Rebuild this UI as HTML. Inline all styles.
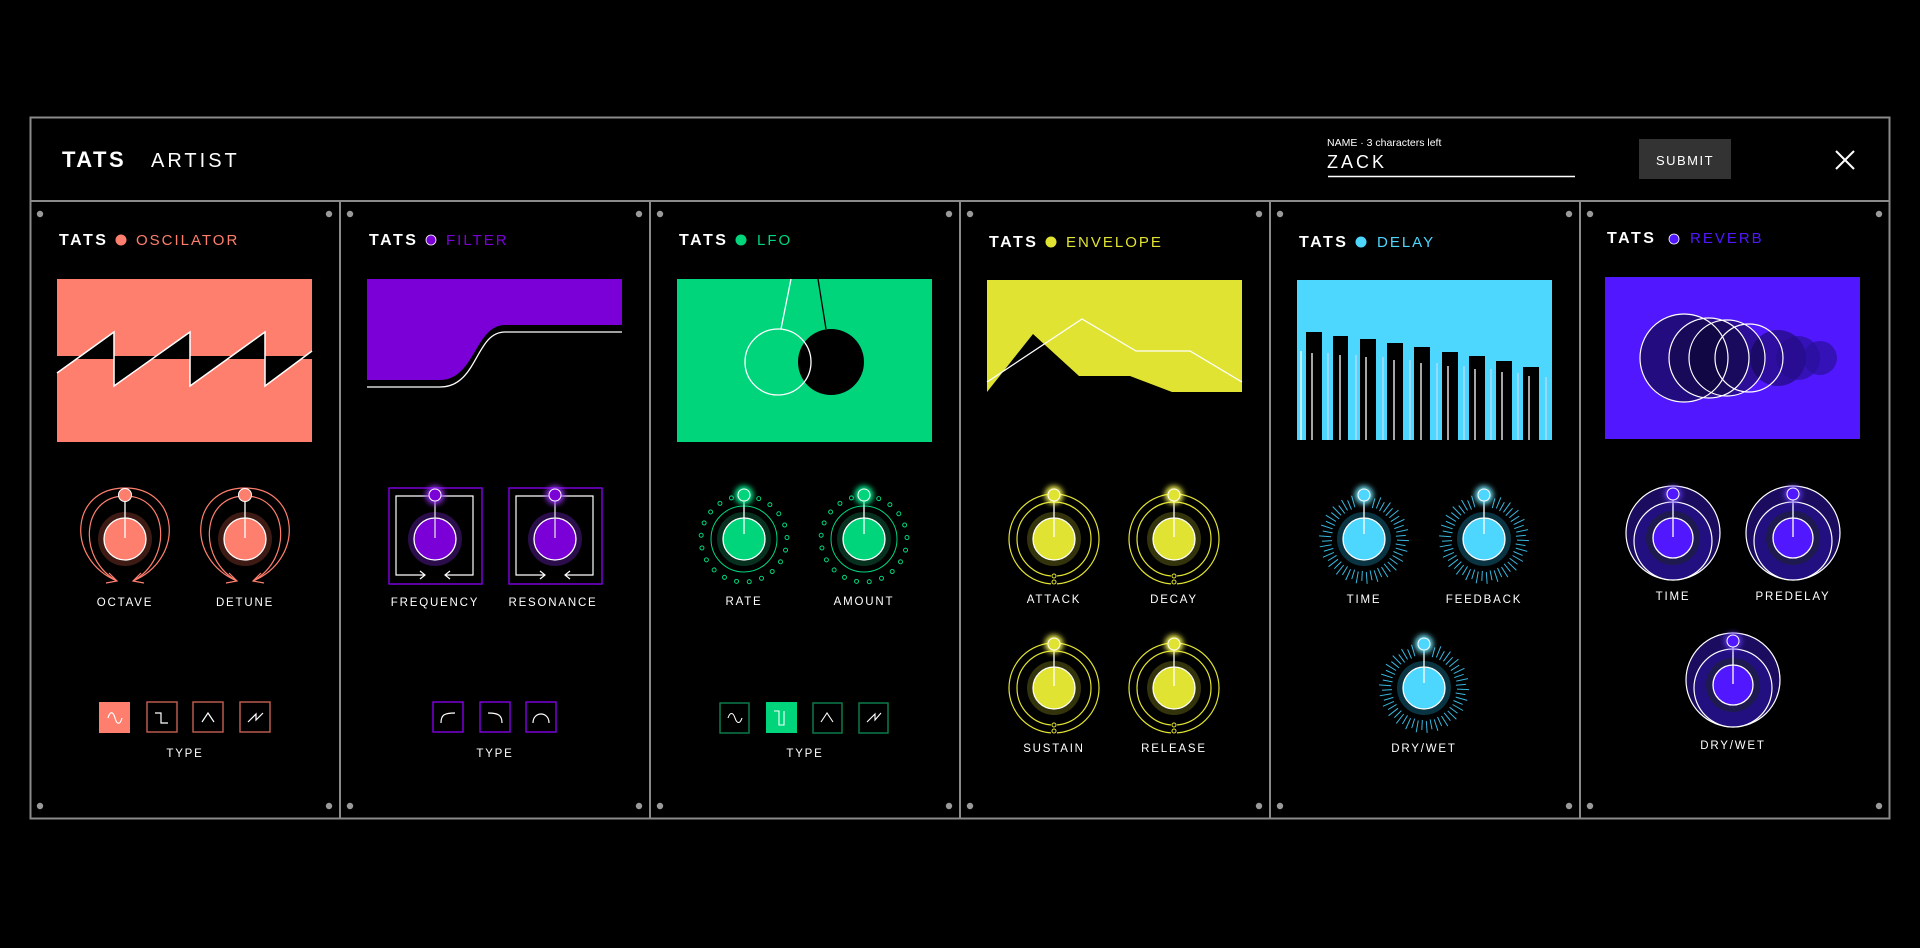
<!DOCTYPE html>
<html><head><meta charset="utf-8"><style>
html,body{margin:0;padding:0;background:#000;width:1920px;height:948px;overflow:hidden}
svg{display:block;font-family:"Liberation Sans",sans-serif}
.tt{font-weight:bold;font-size:16px;letter-spacing:2.5px;fill:#fff}
.nm{font-size:15px;letter-spacing:2px}
.lb{font-size:11.5px;letter-spacing:1.8px;fill:#fff;text-anchor:middle}
</style></head><body>
<svg width="1920" height="948" viewBox="0 0 1920 948" xmlns="http://www.w3.org/2000/svg">
<defs>
<filter id="gl" x="-2" y="-2" width="5" height="5"><feGaussianBlur stdDeviation="3"/></filter>
<g id="screws" fill="#9a9a9a"><circle cx="10" cy="13" r="3.2"/><circle cx="299" cy="13" r="3.2"/><circle cx="10" cy="605" r="3.2"/><circle cx="299" cy="605" r="3.2"/></g>

<!-- OSC knob -->
<g id="kOsc">
<path d="M-8,42 C-60,20 -55,-51 0,-51 C55,-51 60,20 8,42" fill="none" stroke="#ff7f6e" stroke-width="1.2"/>
<path d="M-8,42 C-48,20 -44,-43 0,-43 C44,-43 48,20 8,42" fill="none" stroke="#ff7f6e" stroke-width="1.2"/>
<path d="M-16,34 L-8,42 L-19,44 M16,34 L8,42 L19,44" fill="none" stroke="#ff7f6e" stroke-width="1.2"/>
<circle r="27" fill="#3d1b14"/><circle r="21" fill="#ff7f6e" stroke="#fff" stroke-width="1.3"/>
<line x1="0" y1="-38" x2="0" y2="-1" stroke="#fff" stroke-width="1.3"/>
<circle cy="-44" r="6.5" fill="#ff7f6e" stroke="#fff" stroke-width="1"/>
</g>
<!-- Filter knob -->
<g id="kFil">
<rect x="-46" y="-51" width="93" height="96" fill="none" stroke="#7b00d8" stroke-width="1.5"/>
<path d="M-10,36 H-39 V-43 H38 V36 H10" fill="none" stroke="#fff" stroke-width="1.2"/>
<path d="M-15,32 L-10,36 L-15,40 M15,32 L10,36 L15,40" fill="none" stroke="#fff" stroke-width="1.2"/>
<circle r="27" fill="#2a0d4a"/><circle r="21" fill="#7b00d8" stroke="#fff" stroke-width="1.3"/>
<line x1="0" y1="-38" x2="0" y2="-1" stroke="#ddd" stroke-width="1.3"/>
<circle cy="-44" r="9" fill="#9b30ff" filter="url(#gl)"/>
<circle cy="-44" r="6" fill="#7b00d8" stroke="#fff" stroke-width="1"/>
</g>
<!-- LFO knob -->
<g id="lfoDot"><circle cx="0" cy="-43" r="2" fill="none" stroke="#00d57c" stroke-width="1"/></g>
<g id="kLfo">
<use href="#lfoDot" transform="rotate(20)"/><use href="#lfoDot" transform="rotate(37)"/><use href="#lfoDot" transform="rotate(54)"/><use href="#lfoDot" transform="rotate(71)"/><use href="#lfoDot" transform="rotate(88)"/><use href="#lfoDot" transform="rotate(105)"/><use href="#lfoDot" transform="rotate(122)"/><use href="#lfoDot" transform="rotate(139)"/><use href="#lfoDot" transform="rotate(156)"/><use href="#lfoDot" transform="rotate(173)"/><use href="#lfoDot" transform="rotate(190)"/><use href="#lfoDot" transform="rotate(207)"/><use href="#lfoDot" transform="rotate(224)"/><use href="#lfoDot" transform="rotate(241)"/><use href="#lfoDot" transform="rotate(258)"/><use href="#lfoDot" transform="rotate(275)"/><use href="#lfoDot" transform="rotate(292)"/><use href="#lfoDot" transform="rotate(309)"/><use href="#lfoDot" transform="rotate(326)"/><use href="#lfoDot" transform="rotate(343)"/>
<circle r="33" fill="none" stroke="#00d57c" stroke-width="1"/>
<circle r="27" fill="#07301e"/><circle r="21" fill="#00d57c" stroke="#fff" stroke-width="1.3"/>
<line x1="0" y1="-38" x2="0" y2="-5" stroke="#fff" stroke-width="1.3"/>
<circle cy="-44" r="9" fill="#00ff99" filter="url(#gl)"/>
<circle cy="-44" r="6" fill="#00d57c" stroke="#fff" stroke-width="1"/>
</g>
<!-- Envelope knob -->
<g id="kEnv">
<circle r="45" fill="none" stroke="#e1e332" stroke-width="1.2"/>
<circle r="37" fill="none" stroke="#e1e332" stroke-width="1.2"/>
<rect x="-3" y="34" width="6" height="14" fill="#000"/>
<circle cy="37" r="2" fill="none" stroke="#e1e332" stroke-width="1"/>
<circle cy="43" r="2" fill="none" stroke="#e1e332" stroke-width="1"/>
<circle r="27" fill="#34340c"/><circle r="21" fill="#e1e332" stroke="#fff" stroke-width="1.3"/>
<line x1="0" y1="-38" x2="0" y2="-2" stroke="#fff" stroke-width="1.3"/>
<circle cy="-44" r="9" fill="#ffff55" filter="url(#gl)"/>
<circle cy="-44" r="6" fill="#e1e332" stroke="#fff" stroke-width="1"/>
</g>
<!-- Delay knob -->
<g id="tk"><line x1="0" y1="-32" x2="0" y2="-42" stroke="#3ab8e0" stroke-width="1"/></g>
<g id="tk2"><line x1="0" y1="-33" x2="0" y2="-45" stroke="#3ab8e0" stroke-width="1"/></g>
<g id="kDel">
<g>
<use href="#tk" transform="rotate(15)"/><use href="#tk2" transform="rotate(22)"/><use href="#tk" transform="rotate(29)"/><use href="#tk2" transform="rotate(36)"/><use href="#tk" transform="rotate(43)"/><use href="#tk2" transform="rotate(50)"/><use href="#tk" transform="rotate(57)"/><use href="#tk2" transform="rotate(64)"/><use href="#tk" transform="rotate(71)"/><use href="#tk2" transform="rotate(78)"/><use href="#tk" transform="rotate(85)"/><use href="#tk2" transform="rotate(92)"/><use href="#tk" transform="rotate(99)"/><use href="#tk2" transform="rotate(106)"/><use href="#tk" transform="rotate(113)"/><use href="#tk2" transform="rotate(120)"/><use href="#tk" transform="rotate(127)"/><use href="#tk2" transform="rotate(134)"/><use href="#tk" transform="rotate(141)"/><use href="#tk2" transform="rotate(148)"/><use href="#tk" transform="rotate(155)"/><use href="#tk2" transform="rotate(162)"/><use href="#tk" transform="rotate(169)"/><use href="#tk2" transform="rotate(176)"/><use href="#tk" transform="rotate(183)"/><use href="#tk2" transform="rotate(190)"/><use href="#tk" transform="rotate(197)"/><use href="#tk2" transform="rotate(204)"/><use href="#tk" transform="rotate(211)"/><use href="#tk2" transform="rotate(218)"/><use href="#tk" transform="rotate(225)"/><use href="#tk2" transform="rotate(232)"/><use href="#tk" transform="rotate(239)"/><use href="#tk2" transform="rotate(246)"/><use href="#tk" transform="rotate(253)"/><use href="#tk2" transform="rotate(260)"/><use href="#tk" transform="rotate(267)"/><use href="#tk2" transform="rotate(274)"/><use href="#tk" transform="rotate(281)"/><use href="#tk2" transform="rotate(288)"/><use href="#tk" transform="rotate(295)"/><use href="#tk2" transform="rotate(302)"/><use href="#tk" transform="rotate(309)"/><use href="#tk2" transform="rotate(316)"/><use href="#tk" transform="rotate(323)"/><use href="#tk2" transform="rotate(330)"/><use href="#tk" transform="rotate(337)"/><use href="#tk2" transform="rotate(344)"/>
</g>
<circle r="27" fill="#0b3442"/><circle r="21" fill="#4dd6fe" stroke="#fff" stroke-width="1.3"/>
<line x1="0" y1="-38" x2="0" y2="-5" stroke="#fff" stroke-width="1.3"/>
<circle cy="-44" r="9" fill="#70e8ff" filter="url(#gl)"/>
<circle cy="-44" r="6" fill="#4dd6fe" stroke="#fff" stroke-width="1"/>
</g>
<!-- Reverb knob -->
<g id="kRev">
<circle cy="-5" r="47" fill="#1c0c60" stroke="#fff" stroke-width="1.2"/>
<circle cy="3" r="39" fill="#220f80" stroke="#fff" stroke-width="1.2"/>
<circle r="27" fill="#1e1a50"/><circle r="20" fill="#5118ff" stroke="#fff" stroke-width="1.3"/>
<line x1="0" y1="-38" x2="0" y2="-1" stroke="#fff" stroke-width="1.3"/>
<circle cy="-44" r="8" fill="#6a40ff" filter="url(#gl)"/>
<circle cy="-44" r="6" fill="#5118ff" stroke="#fff" stroke-width="1"/>
</g>
</defs>

<!-- Frame -->
<rect x="30.5" y="117.5" width="1859" height="701" fill="none" stroke="#8a8a8a" stroke-width="2"/>
<line x1="30" y1="201" x2="1890" y2="201" stroke="#8a8a8a" stroke-width="2"/>
<g stroke="#8a8a8a" stroke-width="2"><line x1="340" y1="201" x2="340" y2="819"/><line x1="650" y1="201" x2="650" y2="819"/><line x1="960" y1="201" x2="960" y2="819"/><line x1="1270" y1="201" x2="1270" y2="819"/><line x1="1580" y1="201" x2="1580" y2="819"/></g>

<!-- Header -->
<text x="62" y="167" fill="#fff" font-size="22" font-weight="bold" letter-spacing="2.5">TATS</text>
<text x="151" y="167" fill="#fff" font-size="20" letter-spacing="3">ARTIST</text>
<text x="1327" y="146" fill="#fff" font-size="10.5">NAME · 3 characters left</text>
<text x="1327" y="168" fill="#fff" font-size="18" letter-spacing="3">ZACK</text>
<line x1="1328" y1="176.5" x2="1575" y2="176.5" stroke="#fff" stroke-width="1.5"/>
<rect x="1639" y="139" width="92" height="40" fill="#333"/>
<text x="1685" y="165" fill="#fff" font-size="13" letter-spacing="1.5" text-anchor="middle">SUBMIT</text>
<path d="M1836,151 L1854,169 M1854,151 L1836,169" stroke="#fff" stroke-width="2"/>

<!-- OSC -->
<g transform="translate(30,201)">
<use href="#screws"/>
<text x="29" y="44" class="tt">TATS</text><circle cx="91" cy="39" r="5.5" fill="#ff7f6e"/><text x="106" y="44" class="nm" fill="#ff7f6e">OSCILATOR</text>
<rect x="27" y="78" width="255" height="163" fill="#ff7f6e"/>
<polygon points="27,172 84,131 84,185 160,131 160,185 235,131 235,185 282,150 282,157 27,157" fill="#000" fill-rule="evenodd"/>
<rect x="27" y="155" width="255" height="3" fill="#000"/>
<polyline points="27,172 84,131 84,185 160,131 160,185 235,131 235,185 282,150" fill="none" stroke="#fff" stroke-width="1.5"/>
<use href="#kOsc" x="95" y="338"/><use href="#kOsc" x="215" y="338"/>
<text x="95" y="405" class="lb">OCTAVE</text><text x="215" y="405" class="lb">DETUNE</text>
<rect x="69" y="501" width="31" height="31" fill="#ff7f6e"/>
<path d="M78,517 C80,510 83,510 85,517 C87,524 90,524 92,517" fill="none" stroke="#fff" stroke-width="1.2"/>
<rect x="117" y="501" width="30" height="30" fill="none" stroke="#b85a4d" stroke-width="1.5"/>
<path d="M125,512 H131 V522 H138" fill="none" stroke="#fff" stroke-width="1.2"/>
<rect x="163" y="501" width="30" height="30" fill="none" stroke="#b85a4d" stroke-width="1.5"/>
<path d="M172,521 L178,512 L184,521" fill="none" stroke="#fff" stroke-width="1.2"/>
<rect x="210" y="501" width="30" height="30" fill="none" stroke="#b85a4d" stroke-width="1.5"/>
<path d="M218,521 L226,513 V519 L233,512" fill="none" stroke="#fff" stroke-width="1.2"/>
<text x="155" y="556" class="lb">TYPE</text>
</g>

<!-- FILTER -->
<g transform="translate(340,201)">
<use href="#screws"/>
<text x="29" y="44" class="tt">TATS</text><circle cx="91" cy="39" r="5" fill="#7b00d8" stroke="#fff" stroke-width="0.8"/><text x="106" y="44" class="nm" fill="#7b00d8">FILTER</text>
<path d="M27,78 H282 V124 H165 C135,124 135,179 100,179 H27 Z" fill="#7b00d8"/>
<path d="M27,186 H100 C138,186 135,131 165,131 H282" fill="none" stroke="#fff" stroke-width="1.3"/>
<use href="#kFil" x="95" y="338"/><use href="#kFil" x="215" y="338"/>
<text x="95" y="405" class="lb">FREQUENCY</text><text x="213" y="405" class="lb">RESONANCE</text>
<rect x="93" y="501" width="30" height="30" fill="none" stroke="#7b00d8" stroke-width="1.5"/>
<path d="M101,522 C101,514 104,512 115,512" fill="none" stroke="#fff" stroke-width="1.2"/>
<rect x="140" y="501" width="30" height="30" fill="none" stroke="#7b00d8" stroke-width="1.5"/>
<path d="M148,512 C158,512 162,514 162,522" fill="none" stroke="#fff" stroke-width="1.2"/>
<rect x="186" y="501" width="30" height="30" fill="none" stroke="#7b00d8" stroke-width="1.5"/>
<path d="M193,522 C193,510 209,510 209,522" fill="none" stroke="#fff" stroke-width="1.2"/>
<text x="155" y="556" class="lb">TYPE</text>
</g>

<!-- LFO -->
<g transform="translate(650,201)">
<use href="#screws"/>
<text x="29" y="44" class="tt">TATS</text><circle cx="91" cy="39" r="5.5" fill="#00d57c"/><text x="107" y="44" class="nm" fill="#00d57c">LFO</text>
<rect x="27" y="78" width="255" height="163" fill="#00d57c"/>
<line x1="141" y1="78" x2="131" y2="128" stroke="#fff" stroke-width="1.3"/>
<line x1="168" y1="78" x2="176" y2="128" stroke="#000" stroke-width="1.3"/>
<circle cx="181" cy="161" r="33" fill="#000"/>
<circle cx="128" cy="161" r="33" fill="none" stroke="#fff" stroke-width="1.3"/>
<use href="#kLfo" x="94" y="338"/><use href="#kLfo" x="214" y="338"/>
<text x="94" y="404" class="lb">RATE</text><text x="214" y="404" class="lb">AMOUNT</text>
<rect x="70" y="502" width="29" height="30" fill="none" stroke="#0a7a4b" stroke-width="1.5"/>
<path d="M78,517 C80,511 83,511 85,517 C87,523 90,523 92,517" fill="none" stroke="#fff" stroke-width="1.1"/>
<rect x="116" y="501" width="31" height="31" fill="#00d57c"/>
<path d="M124,510 H129 V524 H134 V510" fill="none" stroke="#fff" stroke-width="1.1"/>
<rect x="163" y="502" width="29" height="30" fill="none" stroke="#0a7a4b" stroke-width="1.5"/>
<path d="M171,521 L177,512 L183,521" fill="none" stroke="#fff" stroke-width="1.1"/>
<rect x="209" y="502" width="29" height="30" fill="none" stroke="#0a7a4b" stroke-width="1.5"/>
<path d="M217,521 L225,513 V519 L231,512" fill="none" stroke="#fff" stroke-width="1.1"/>
<text x="155" y="556" class="lb">TYPE</text>
</g>

<!-- ENVELOPE -->
<g transform="translate(960,201)">
<use href="#screws"/>
<text x="29" y="46" class="tt">TATS</text><circle cx="91" cy="41" r="5.5" fill="#e1e332"/><text x="106" y="46" class="nm" fill="#e1e332">ENVELOPE</text>
<rect x="27" y="79" width="255" height="120" fill="#000"/>
<polygon points="27,79 282,79 282,191 212,191 170,175 119,175 73,133 27,191" fill="#e1e332"/>
<polyline points="27,181 122,118 176,150 230,150 282,181" fill="none" stroke="#fff" stroke-width="1.3"/>
<use href="#kEnv" x="94" y="338"/><use href="#kEnv" x="214" y="338"/>
<use href="#kEnv" x="94" y="487"/><use href="#kEnv" x="214" y="487"/>
<text x="94" y="402" class="lb">ATTACK</text><text x="214" y="402" class="lb">DECAY</text>
<text x="94" y="551" class="lb">SUSTAIN</text><text x="214" y="551" class="lb">RELEASE</text>
</g>

<!-- DELAY -->
<g transform="translate(1270,201)">
<use href="#screws"/>
<text x="29" y="46" class="tt">TATS</text><circle cx="91" cy="41" r="5.5" fill="#4dd6fe"/><text x="107" y="46" class="nm" fill="#4dd6fe">DELAY</text>
<rect x="27" y="79" width="255" height="160" fill="#4dd6fe"/>
<g fill="#000">
<rect x="36" y="131" width="16" height="108"/><rect x="63" y="135" width="15" height="104"/><rect x="90" y="138" width="16" height="101"/><rect x="117" y="142" width="16" height="97"/><rect x="144" y="146" width="16" height="93"/><rect x="172" y="151" width="16" height="88"/><rect x="199" y="155" width="16" height="84"/><rect x="226" y="160" width="16" height="79"/><rect x="253" y="166" width="16" height="73"/>
</g>
<g stroke="#fff" stroke-width="1.3">
<line x1="31" y1="150" x2="31" y2="239"/><line x1="42" y1="152" x2="42" y2="239"/><line x1="58" y1="152" x2="58" y2="239" stroke="#bdf"/>
<line x1="70" y1="154" x2="70" y2="239"/><line x1="86" y1="154" x2="86" y2="239" stroke="#bdf"/><line x1="96" y1="156" x2="96" y2="239"/><line x1="113" y1="156" x2="113" y2="239" stroke="#bdf"/>
<line x1="124" y1="159" x2="124" y2="239"/><line x1="140" y1="159" x2="140" y2="239" stroke="#bdf"/><line x1="151" y1="162" x2="151" y2="239"/><line x1="167" y1="162" x2="167" y2="239" stroke="#bdf"/>
<line x1="178" y1="165" x2="178" y2="239"/><line x1="194" y1="165" x2="194" y2="239" stroke="#bdf"/><line x1="205" y1="168" x2="205" y2="239"/><line x1="221" y1="168" x2="221" y2="239" stroke="#bdf"/>
<line x1="232" y1="171" x2="232" y2="239"/><line x1="248" y1="172" x2="248" y2="239" stroke="#bdf"/><line x1="259" y1="175" x2="259" y2="239"/><line x1="276" y1="176" x2="276" y2="239" stroke="#bdf"/>
</g>
<use href="#kDel" x="94" y="338"/><use href="#kDel" x="214" y="338"/><use href="#kDel" x="154" y="487"/>
<text x="94" y="402" class="lb">TIME</text><text x="214" y="402" class="lb">FEEDBACK</text>
<text x="154" y="551" class="lb">DRY/WET</text>
</g>

<!-- REVERB -->
<g transform="translate(1580,201)">
<use href="#screws"/>
<text x="27" y="42" class="tt">TATS</text><circle cx="94" cy="38" r="5" fill="#5118ff" stroke="#fff" stroke-width="0.8"/><text x="110" y="42" class="nm" fill="#5118ff">REVERB</text>
<rect x="25" y="76" width="255" height="162" fill="#5118ff"/>
<circle cx="240" cy="157" r="17" fill="#2a0f9a" opacity="0.7"/>
<circle cx="218" cy="157" r="22" fill="#2a0f9a" opacity="0.7"/>
<circle cx="198" cy="157" r="28" fill="#250c8a" opacity="0.8"/>
<circle cx="104" cy="157" r="44" fill="#220c80"/>
<circle cx="129" cy="157" r="40" fill="#12083f" opacity="0.6"/>
<circle cx="147" cy="157" r="38" fill="#0a0530" opacity="0.5"/>
<g fill="none" stroke="#fff" stroke-width="1.2">
<circle cx="104" cy="157" r="44"/><circle cx="129" cy="157" r="40"/><circle cx="147" cy="157" r="38"/><circle cx="169" cy="157" r="34"/>
</g>
<use href="#kRev" x="93" y="337"/><use href="#kRev" x="213" y="337"/><use href="#kRev" x="153" y="484"/>
<text x="93" y="399" class="lb">TIME</text><text x="213" y="399" class="lb">PREDELAY</text>
<text x="153" y="548" class="lb">DRY/WET</text>
</g>
</svg>
</body></html>
